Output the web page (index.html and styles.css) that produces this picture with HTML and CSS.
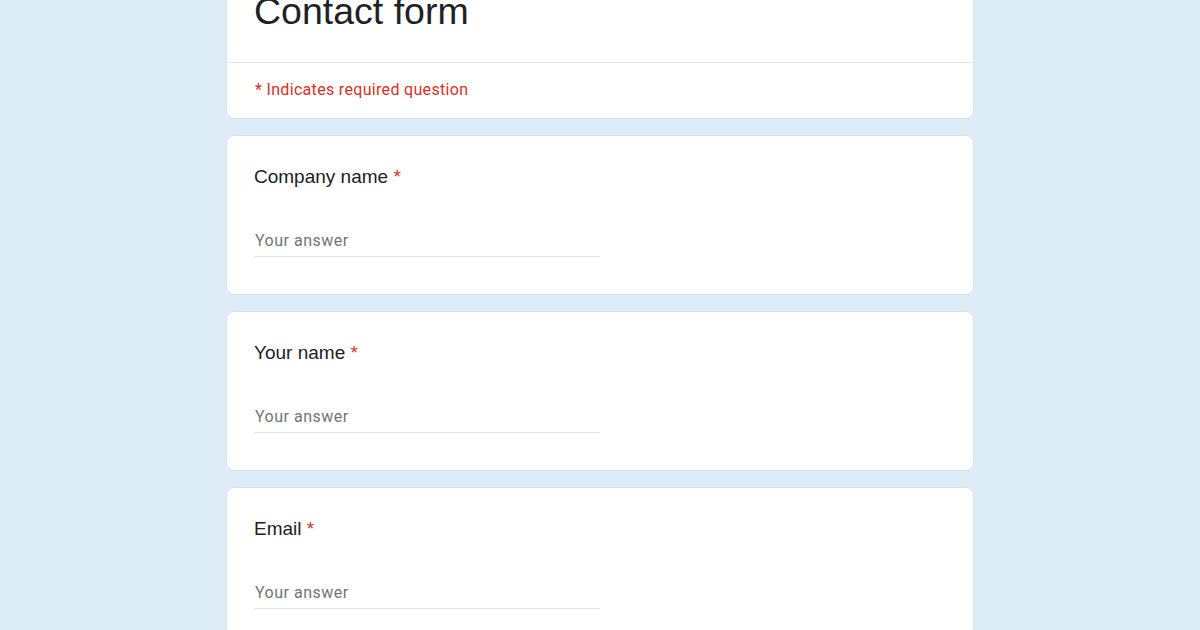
FILE: index.html
```html
<!DOCTYPE html>
<html lang="en">
<head>
<meta charset="utf-8">
<title>Contact form</title>
<link rel="stylesheet" href="styles.css">
</head>
<body>
<main class="page">
  <section class="card card-header">
    <div class="header-top">
      <h1 class="form-title">Contact form</h1>
    </div>
    <div class="header-note">* Indicates required question</div>
  </section>

  <section class="card question">
    <div class="q-label">Company name <span class="req">*</span></div>
    <div class="q-input">Your answer</div>
  </section>

  <section class="card question">
    <div class="q-label">Your name <span class="req">*</span></div>
    <div class="q-input">Your answer</div>
  </section>

  <section class="card question">
    <div class="q-label">Email <span class="req">*</span></div>
    <div class="q-input">Your answer</div>
  </section>
</main>
</body>
</html>
```

FILE: styles.css
```css
html, body {
  margin: 0;
  padding: 0;
  background: #ddedf8;
  height: 100%;
  overflow: hidden;
}

.page {
  width: 748px;
  margin: -33px auto 0;
  display: flex;
  flex-direction: column;
  gap: 16px;
}

.card {
  background: #ffffff;
  border: 1px solid #dde0e3;
  border-radius: 8px;
  box-sizing: border-box;
}

.header-top {
  padding: 21px 28px 29px 27px;
  border-bottom: 1px solid #e3e5e8;
}

.form-title {
  margin: 0;
  font-family: "Liberation Sans", Arial, sans-serif;
  font-weight: 400;
  font-size: 37.5px;
  line-height: 44px;
  color: #202124;
}

.header-note {
  padding: 17px 28px 18px 28px;
  font-family: Roboto, "Liberation Sans", sans-serif;
  font-size: 16px;
  line-height: 20px;
  letter-spacing: 0.32px;
  color: #d93025;
}

.question {
  padding: 29px 27px 37px 27px;
  height: 160px;
}

.q-label {
  font-family: "Liberation Sans", Arial, sans-serif;
  font-size: 19px;
  line-height: 24px;
  color: #202124;
}

.req {
  color: #d93025;
}

.q-input {
  margin-top: 42px;
  width: 346px;
  padding-bottom: 5px;
  border-bottom: 1px solid #e6e6e6;
  font-family: Roboto, "Liberation Sans", sans-serif;
  font-size: 16px;
  line-height: 20px;
  letter-spacing: 0.5px;
  color: #70757a;
  padding-left: 1px;
  box-sizing: border-box;
}
```
